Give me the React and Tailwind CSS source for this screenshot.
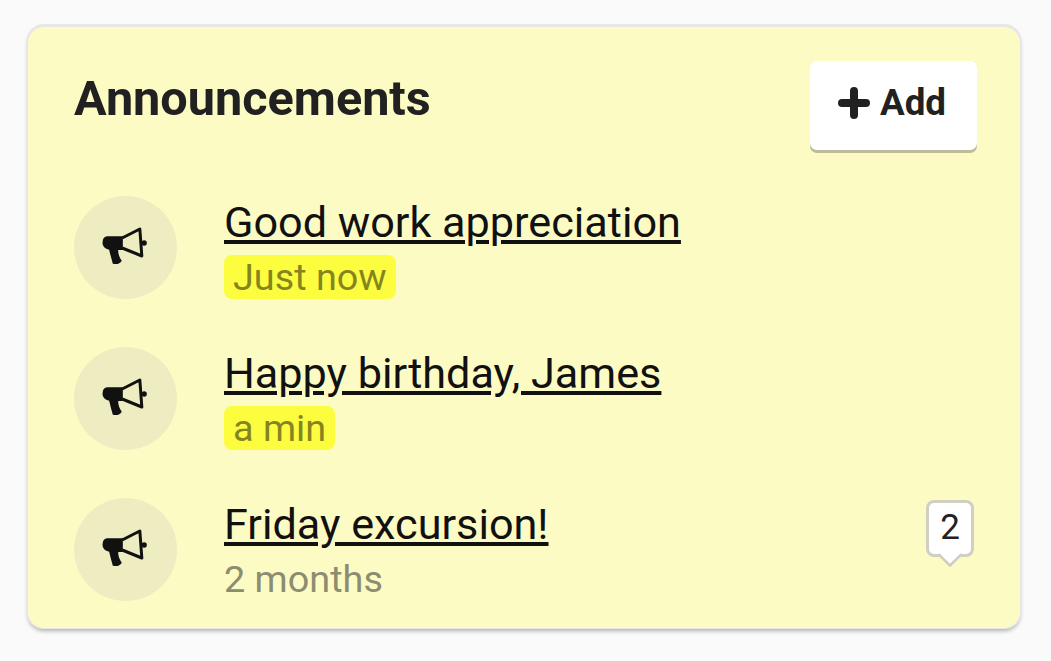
const items = [
  { title: "Good work appreciation", time: "Just now", hi: true },
  { title: "Happy birthday, James", time: "a min", hi: true },
  { title: "Friday excursion!", time: "2 months", hi: false, count: 2 },
];

function Megaphone() {
  return (
    <svg width="47" height="40" viewBox="125 125 140 120" className="block -ml-[2px] mb-[4px]">
      <path d="M142 156 H190 V197 H176 C176 210 180 220 187 229 Q178 243 160 238 C156 224 152 210 149 196 Q129 192 129 176 Q129 158 142 156 Z" fill="#111111" />
      <path d="M188 161 L241 134 L247 215 L188 191" fill="none" stroke="#111111" strokeWidth="9" strokeLinejoin="round" />
      <circle cx="254" cy="176" r="8" fill="#111111" />
    </svg>
  );
}

function Row({ title, time, hi, count }) {
  return (
    <div className="flex items-center h-[103px]">
      <div className="w-[103px] h-[103px] rounded-full bg-[#eeedc1] flex items-center justify-center shrink-0 mr-[47px]">
        <Megaphone />
      </div>
      <div className="flex-1 flex flex-col items-start mt-[1px]">
        <a className="text-[43.2px] leading-[50px] text-[#111111] underline decoration-[3.5px] underline-offset-[3px] whitespace-nowrap">{title}</a>
        <span className={"text-[37.8px] leading-[44px] rounded-[8px] mt-[7px] " + (hi ? "px-[9px] bg-[#fdfd40] text-[#85851f]" : "bg-transparent text-[#8c8c70]")}>{time}</span>
      </div>
      {count ? (
        <div className="relative w-[48px] h-[57px] mr-[3px] mb-[42px] rounded-[8px] border-[3px] border-[#cfcfc4] bg-white flex items-center justify-center text-[35px] text-[#222222]">
          {count}
          <div className="absolute left-1/2 -bottom-[10px] -ml-[9px] w-[18px] h-[18px] rotate-45 bg-white border-r-[3px] border-b-[3px] border-[#cfcfc4] rounded-br-[3px]" />
        </div>
      ) : null}
    </div>
  );
}

export default function App() {
  return (
    <div className="w-[1051px] h-[661px] bg-[#fafafa] pt-[27px] pl-[28px] font-['Roboto',sans-serif] overflow-hidden">
      <div className="w-[992px] h-[601px] rounded-[16px] bg-[#fcfbc3] shadow-[0_-1px_0_2px_#e8e6e6,0_3px_4px_rgba(0,0,0,0.3)] pl-[46px] pr-[43px] pt-[34px]">
        <div className="flex items-start justify-between h-[135px]">
          <h1 className="text-[48.6px] leading-[76px] font-bold text-[#212121]">Announcements</h1>
          <button className="w-[167px] h-[89px] pb-[6px] pr-[3px] rounded-[7px] bg-white shadow-[0_3px_0_#bdbb98] flex items-center justify-center gap-[10px] text-[36.75px] font-bold text-[#212121]">
            <svg width="32" height="32" viewBox="0 0 32 32"><path d="M16 4 V28 M4 16 H28" stroke="#212121" strokeWidth="8" strokeLinecap="round" /></svg>
            <span>Add</span>
          </button>
        </div>
        <div className="flex flex-col gap-[48px]">
          {items.map((it) => <Row key={it.title} {...it} />)}
        </div>
      </div>
    </div>
  );
}
